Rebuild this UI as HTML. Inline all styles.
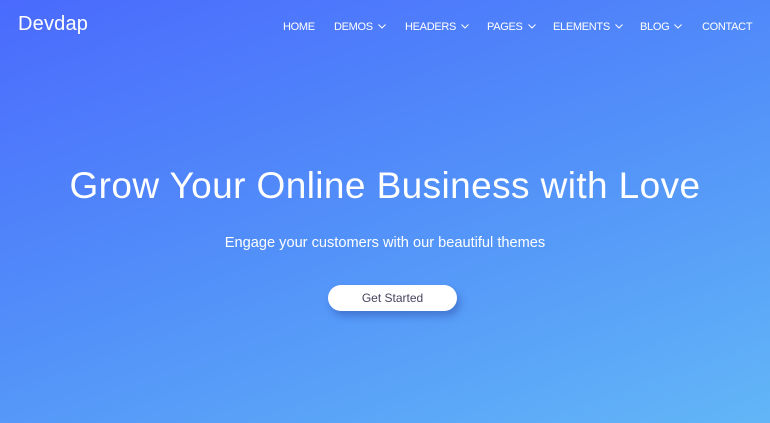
<!DOCTYPE html>
<html><head><style>
*{margin:0;padding:0;box-sizing:border-box}
body{width:770px;height:423px;overflow:hidden;font-family:"Liberation Sans",sans-serif;color:#fff;
background:linear-gradient(160deg,#4a6afd 0%,#5290f9 50%,#62b6f7 100%);position:relative}
.logo{position:absolute;left:18px;top:13px;font-size:20px;letter-spacing:0.2px}
.nav{position:absolute;top:21px;font-size:11px;letter-spacing:-0.3px}
.nav span{position:absolute;white-space:nowrap}
.nav svg{margin-left:5px;vertical-align:1px}
h1{position:absolute;top:165px;left:0;width:770px;text-align:center;font-weight:normal;font-size:37px;letter-spacing:0.4px}
p{position:absolute;top:235px;left:0;width:770px;text-align:center;font-size:14.6px}
.btn{position:absolute;left:328px;top:285px;width:129px;height:26px;border-radius:13px;background:#fff;color:#4a4460;font-size:12px;text-align:center;line-height:26px;box-shadow:3px 5px 8px rgba(30,50,140,.35)}
</style></head><body>
<div class="logo">Devdap</div>
<div class="nav">
<span style="left:283px">HOME</span>
<span style="left:334px">DEMOS<svg width="8" height="5"><path d="M0.5 0.5 L4 4 L7.5 0.5" stroke="#fff" fill="none"/></svg></span>
<span style="left:405px">HEADERS<svg width="8" height="5"><path d="M0.5 0.5 L4 4 L7.5 0.5" stroke="#fff" fill="none"/></svg></span>
<span style="left:487px">PAGES<svg width="8" height="5"><path d="M0.5 0.5 L4 4 L7.5 0.5" stroke="#fff" fill="none"/></svg></span>
<span style="left:553px">ELEMENTS<svg width="8" height="5"><path d="M0.5 0.5 L4 4 L7.5 0.5" stroke="#fff" fill="none"/></svg></span>
<span style="left:640px">BLOG<svg width="8" height="5"><path d="M0.5 0.5 L4 4 L7.5 0.5" stroke="#fff" fill="none"/></svg></span>
<span style="left:702px">CONTACT</span>
</div>
<h1>Grow Your Online Business with Love</h1>
<p>Engage your customers with our beautiful themes</p>
<div class="btn">Get Started</div>
</body></html>
